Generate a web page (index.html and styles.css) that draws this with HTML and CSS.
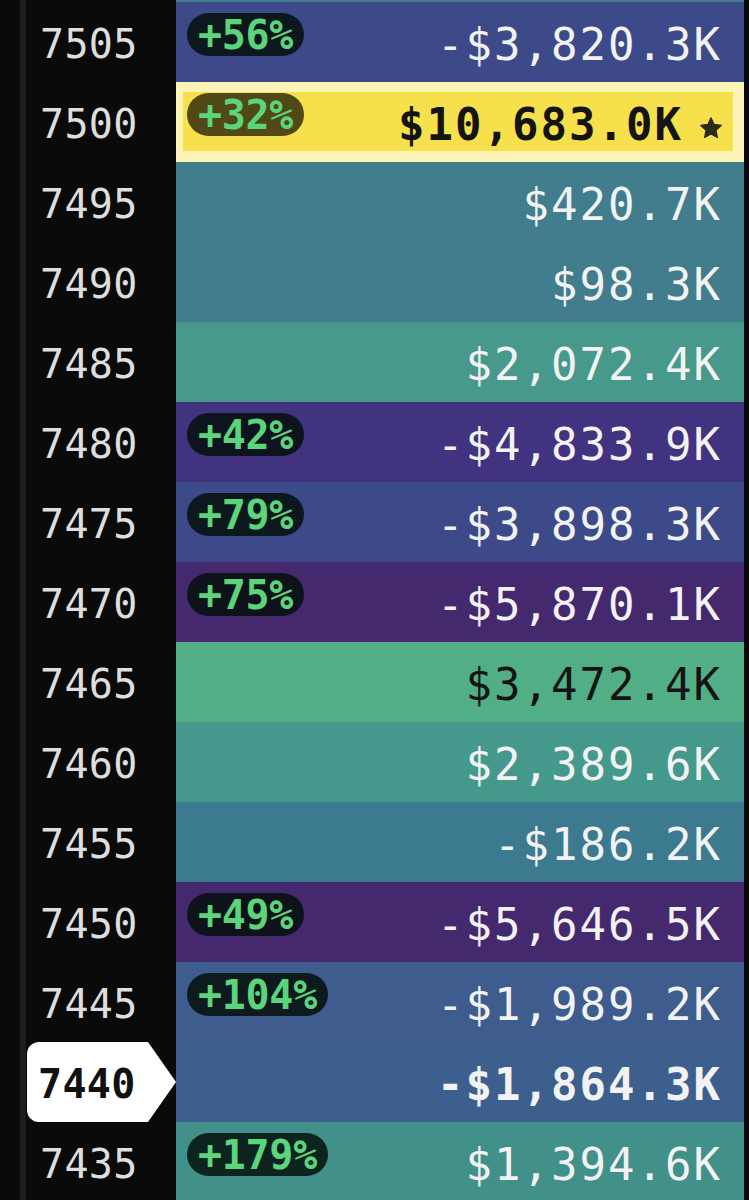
FILE: index.html
```html
<!DOCTYPE html>
<html lang="en">
<head>
<meta charset="utf-8">
<title>Price ladder</title>
<link rel="stylesheet" href="styles.css">
</head>
<body>
<div class="ladder">
  <div class="row stub"><div class="price"></div><div class="cell c-teal"></div></div>

  <div class="row"><div class="price">7505</div><div class="cell c-blue"><span class="badge">+56%</span><span class="value">-$3,820.3K</span></div></div>
  <div class="row"><div class="price">7500</div><div class="cell c-yellow"><span class="badge">+32%</span><span class="value dark bold">$10,683.0K</span><svg class="star" viewBox="0 0 24 24" width="24" height="24"><path d="M12 1.8l3.1 6.6 7.2.9-5.3 5 1.4 7.1L12 17.9l-6.4 3.5 1.4-7.1-5.3-5 7.2-.9z" fill="#2c2a1a" stroke="#2c2a1a" stroke-width="1.2" stroke-linejoin="round"/></svg></div></div>
  <div class="row"><div class="price">7495</div><div class="cell c-teal"><span class="value">$420.7K</span></div></div>
  <div class="row"><div class="price">7490</div><div class="cell c-teal"><span class="value">$98.3K</span></div></div>
  <div class="row"><div class="price">7485</div><div class="cell c-green"><span class="value">$2,072.4K</span></div></div>
  <div class="row"><div class="price">7480</div><div class="cell c-indigo"><span class="badge">+42%</span><span class="value">-$4,833.9K</span></div></div>
  <div class="row"><div class="price">7475</div><div class="cell c-blue"><span class="badge">+79%</span><span class="value">-$3,898.3K</span></div></div>
  <div class="row"><div class="price">7470</div><div class="cell c-purple"><span class="badge">+75%</span><span class="value">-$5,870.1K</span></div></div>
  <div class="row"><div class="price">7465</div><div class="cell c-lime"><span class="value dark">$3,472.4K</span></div></div>
  <div class="row"><div class="price">7460</div><div class="cell c-green2"><span class="value">$2,389.6K</span></div></div>
  <div class="row"><div class="price">7455</div><div class="cell c-teal2"><span class="value">-$186.2K</span></div></div>
  <div class="row"><div class="price">7450</div><div class="cell c-purple"><span class="badge">+49%</span><span class="value">-$5,646.5K</span></div></div>
  <div class="row"><div class="price">7445</div><div class="cell c-steel"><span class="badge">+104%</span><span class="value">-$1,989.2K</span></div></div>
  <div class="row"><div class="price current"><span class="marker">7440</span></div><div class="cell c-steel2"><span class="value bold">-$1,864.3K</span></div></div>
  <div class="row"><div class="price">7435</div><div class="cell c-sea"><span class="badge">+179%</span><span class="value">$1,394.6K</span></div></div>
</div>
</body>
</html>
```

FILE: styles.css
```css
html, body {
  margin: 0;
  padding: 0;
}

body {
  width: 749px;
  height: 1200px;
  overflow: hidden;
  background: linear-gradient(to right, #0a0a0a 0, #0a0a0a 20px, #1d1d1d 20px, #1d1d1d 26px, #0a0a0a 26px);
  font-family: "DejaVu Sans Mono", "Liberation Mono", monospace;
}

.ladder {
  display: flex;
  flex-direction: column;
  width: 749px;
}

.row {
  display: grid;
  grid-template-columns: 176px 568px;
  height: 80px;
}

.row.stub {
  height: 2px;
}

.price {
  display: flex;
  align-items: center;
  padding-left: 40px;
  padding-top: 4px;
  box-sizing: border-box;
  color: #dedede;
  font-size: 40px;
  letter-spacing: 0.3px;
}

.price.current {
  padding-left: 27px;
  padding-top: 0;
}

.marker {
  position: relative;
  display: flex;
  align-items: center;
  box-sizing: border-box;
  width: 121px;
  height: 80px;
  padding-left: 11px;
  padding-top: 4px;
  background: #ffffff;
  color: #111111;
  font-weight: bold;
  border-radius: 12px 0 0 12px;
}

.marker::after {
  content: "";
  position: absolute;
  left: 100%;
  top: 0;
  width: 28px;
  height: 80px;
  background: #ffffff;
  clip-path: polygon(0 0, 100% 50%, 0 100%);
}

.cell {
  display: flex;
  align-items: center;
  box-sizing: border-box;
  padding-right: 22px;
  padding-left: 11px;
}

.badge {
  align-self: flex-start;
  margin-top: 11px;
  height: 43px;
  line-height: 44px;
  padding: 0 11px;
  border-radius: 22px;
  background: rgba(4, 14, 10, 0.84);
  color: #5cd47c;
  font-weight: bold;
  font-size: 40px;
  letter-spacing: -0.3px;
}

.value {
  margin-left: auto;
  padding-top: 5px;
  color: #f2f2f2;
  font-size: 44px;
  letter-spacing: 2px;
}

.value.dark {
  color: #141414;
}

.value.bold {
  font-weight: bold;
}

.star {
  flex: none;
  margin-left: 16px;
  margin-top: 12px;
}

.c-blue { background: #3d4a8a; }
.c-teal { background: #417d8d; }
.c-teal2 { background: #3b7a8f; }
.c-green { background: #46998b; }
.c-green2 { background: #45998c; }
.c-indigo { background: #413380; }
.c-purple { background: #45296f; }
.c-lime { background: #52ae84; }
.c-steel { background: #3e5d8e; }
.c-steel2 { background: #3d5f8e; }
.c-sea { background: #42908a; }

.c-yellow {
  background: #f6e04c;
  border-style: solid;
  border-color: #fbf4b6;
  border-width: 10px 11px 11px 7px;
  padding-left: 4px;
  padding-right: 10px;
}

.c-yellow .badge {
  margin-top: 1px;
  background: rgba(10, 8, 0, 0.7);
}
```
